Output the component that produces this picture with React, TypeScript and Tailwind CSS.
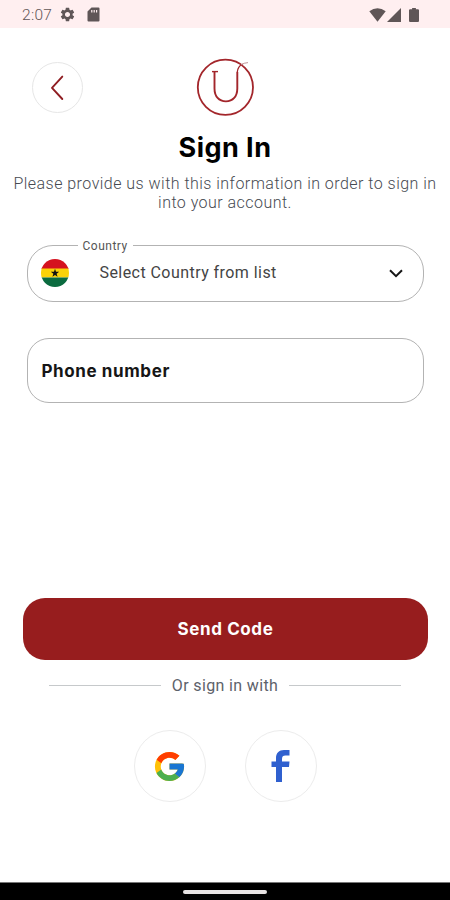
import { ReactNode } from "react";
import { FcGoogle } from "react-icons/fc";
import { MdSettings } from "react-icons/md";

function StatusBar() {
  return (
    <header className="flex h-7 shrink-0 items-center bg-[#ffeff0] pt-px pr-[31px] pl-[22px] text-[#5f5657]">
      <span className="w-[31px] pt-0.5 font-[Roboto] text-[15.5px] leading-none font-light tracking-[0.3px]">2:07</span>
      <MdSettings className="ml-[6px] h-[17px] w-[17px]" />
      <svg className="ml-[11px] h-[15px] w-[13px]" viewBox="0 0 13 15" fill="currentColor">
        <path
          fillRule="evenodd"
          d="M4.5 0.5H11.5Q12.5 0.5 12.5 1.5V13.5Q12.5 14.5 11.5 14.5H1.5Q0.5 14.5 0.5 13.5V4.5ZM4.2 3V5.6H5.4V3ZM6.6 3V5.6H7.8V3ZM9 3V5.6H10.2V3Z"
        />
      </svg>

      <div className="ml-auto flex items-center">
        <svg className="h-[14px] w-[17px]" viewBox="0 0 17 14" fill="currentColor">
          <path d="M0.3 3.2Q8.5 -2.6 16.7 3.2L8.5 13.8Z" />
        </svg>
        <svg className="ml-px h-[14px] w-[14px]" viewBox="0 0 14 14" fill="currentColor">
          <path d="M14 0V14H0Z" />
        </svg>
        <svg className="ml-[8px] h-[14px] w-[10px]" viewBox="0 0 9 14" fill="currentColor" preserveAspectRatio="none">
          <path d="M2.8 0H6.2V1.3H8Q9 1.3 9 2.3V13Q9 14 8 14H1Q0 14 0 13V2.3Q0 1.3 1 1.3H2.8Z" />
        </svg>
      </div>
    </header>
  );
}

function Logo() {
  return (
    <svg className="h-[60px] w-[60px]" viewBox="0 0 60 60" fill="none" stroke="#a3262b">
      <circle cx="30.4" cy="30.3" r="27.6" strokeWidth="1.8" />
      <path d="M17 14.6H23" strokeWidth="1.4" />
      <path d="M19.5 14.6V31.5C19.5 39.5 24 44.4 30.9 44.4S42.3 39.5 42.3 31.5V15" strokeWidth="1.9" />
      <path d="M42.3 15Q42.8 9.5 47.5 7" strokeWidth="1.4" />
      <path d="M46 7.8Q49 5.8 53 5.6" stroke="#b98a8c" strokeWidth="0.9" />
    </svg>
  );
}

function SocialButton({ children }: { children: ReactNode }) {
  return (
    <button className="flex h-[72px] w-[72px] items-center justify-center rounded-full border border-[#ececec]">
      {children}
    </button>
  );
}

function GhanaFlag() {
  return (
    <svg className="h-7 w-7 rounded-full" viewBox="0 0 28 28">
      <rect width="28" height="10" fill="#d5121f" />
      <rect y="9.5" width="28" height="9" fill="#fbd209" />
      <rect y="18.5" width="28" height="9.5" fill="#0b6b3f" />
      <path d="M14 9.8L15 12.8H18.2L15.6 14.7L16.6 17.8L14 15.9L11.4 17.8L12.4 14.7L9.8 12.8H13Z" fill="#111" />
    </svg>
  );
}

export default function App() {
  return (
    <div className="flex h-[900px] w-[450px] flex-col bg-white font-[Inter,sans-serif] text-black">
      <StatusBar />

      <main className="flex flex-1 flex-col">
        <div className="grid grid-cols-3 px-8 pt-[29px]">
          <button className="mt-[5px] flex h-[51px] w-[51px] items-center justify-center rounded-full border border-[#e6e6e6] pr-[2px]">
            <svg className="h-[26px] w-[14px]" viewBox="0 0 14 26" fill="none" stroke="#8f1d22" strokeWidth="1.9">
              <path d="M12.3 1.6L2 12.9L12.3 24" strokeLinecap="round" strokeLinejoin="round" />
            </svg>
          </button>
          <div className="flex justify-center">
            <Logo />
          </div>
        </div>

        <h1 className="mt-[15px] text-center text-[27px] leading-8 font-bold tracking-[0.45px]">Sign In</h1>
        <p className="mt-[10px] text-center font-[Roboto,sans-serif] text-[16px] leading-[19px] font-light tracking-[0.47px] text-[#464a51]">
          Please provide us with this information in order to sign in
          <br />
          into your account.
        </p>

        <fieldset className="mx-[26.5px] mt-[26px] h-[64px] rounded-[26px] border border-[#b3b3b3] pr-[19px] pl-[13px]">
          <legend className="ml-[37px] px-[5px] pt-0.5 font-[Roboto,sans-serif] text-[12px] leading-3 tracking-[0.5px] text-[#555]">
            Country
          </legend>
          <div className="flex items-center pt-[7px]">
            <GhanaFlag />
            <span className="ml-[31px] font-[Roboto,sans-serif] text-[16px] tracking-[0.44px] text-[#444]">
              Select Country from list
            </span>
            <svg className="ml-auto h-[9px] w-4" viewBox="0 0 16 9" fill="none" stroke="#161616" strokeWidth="2">
              <path d="M2 1.3L8 7.2L14 1.3" />
            </svg>
          </div>
        </fieldset>

        <div className="mx-[26.5px] mt-9 flex h-[65px] items-center rounded-[22px] border border-[#b3b3b3] px-[14px] pt-0.5">
          <span className="text-[17px] font-bold tracking-[0.6px] text-[#161616]">Phone number</span>
        </div>

        <button className="mt-[195px] mr-[22px] ml-[23px] h-[62px] rounded-[22px] bg-[#971d1e] pt-0.5 text-[17px] font-bold tracking-[0.6px] text-white">
          Send Code
        </button>

        <div className="mx-[49px] mt-[13px] flex items-center justify-between">
          <span className="h-px w-[112px] bg-[#c6c9cb]" />
          <span className="pt-0.5 font-[Roboto,sans-serif] text-[16px] leading-[22px] tracking-[0.36px] text-[#5d626a]">
            Or sign in with
          </span>
          <span className="h-px w-[112px] bg-[#c6c9cb]" />
        </div>

        <div className="mt-[33px] flex justify-center gap-[39px]">
          <SocialButton>
            <FcGoogle className="h-[35px] w-[35px]" />
          </SocialButton>
          <SocialButton>
            <svg className="h-8 w-[19px]" viewBox="0 0 19 32" fill="#2f60cf">
              <path d="M5 32V17H0.5V11.5H5V8C5 3 8 0 13 0H18.5V5.5H14.5C12 5.5 11 6.5 11 9V11.5H18.5L18 17H11V32Z" />
            </svg>
          </SocialButton>
        </div>
      </main>

      <footer className="flex h-[18px] shrink-0 items-center justify-center border-t border-[#777] bg-black">
        <span className="h-1 w-[84px] rounded-full bg-[#e8e4e4]" />
      </footer>
    </div>
  );
}
